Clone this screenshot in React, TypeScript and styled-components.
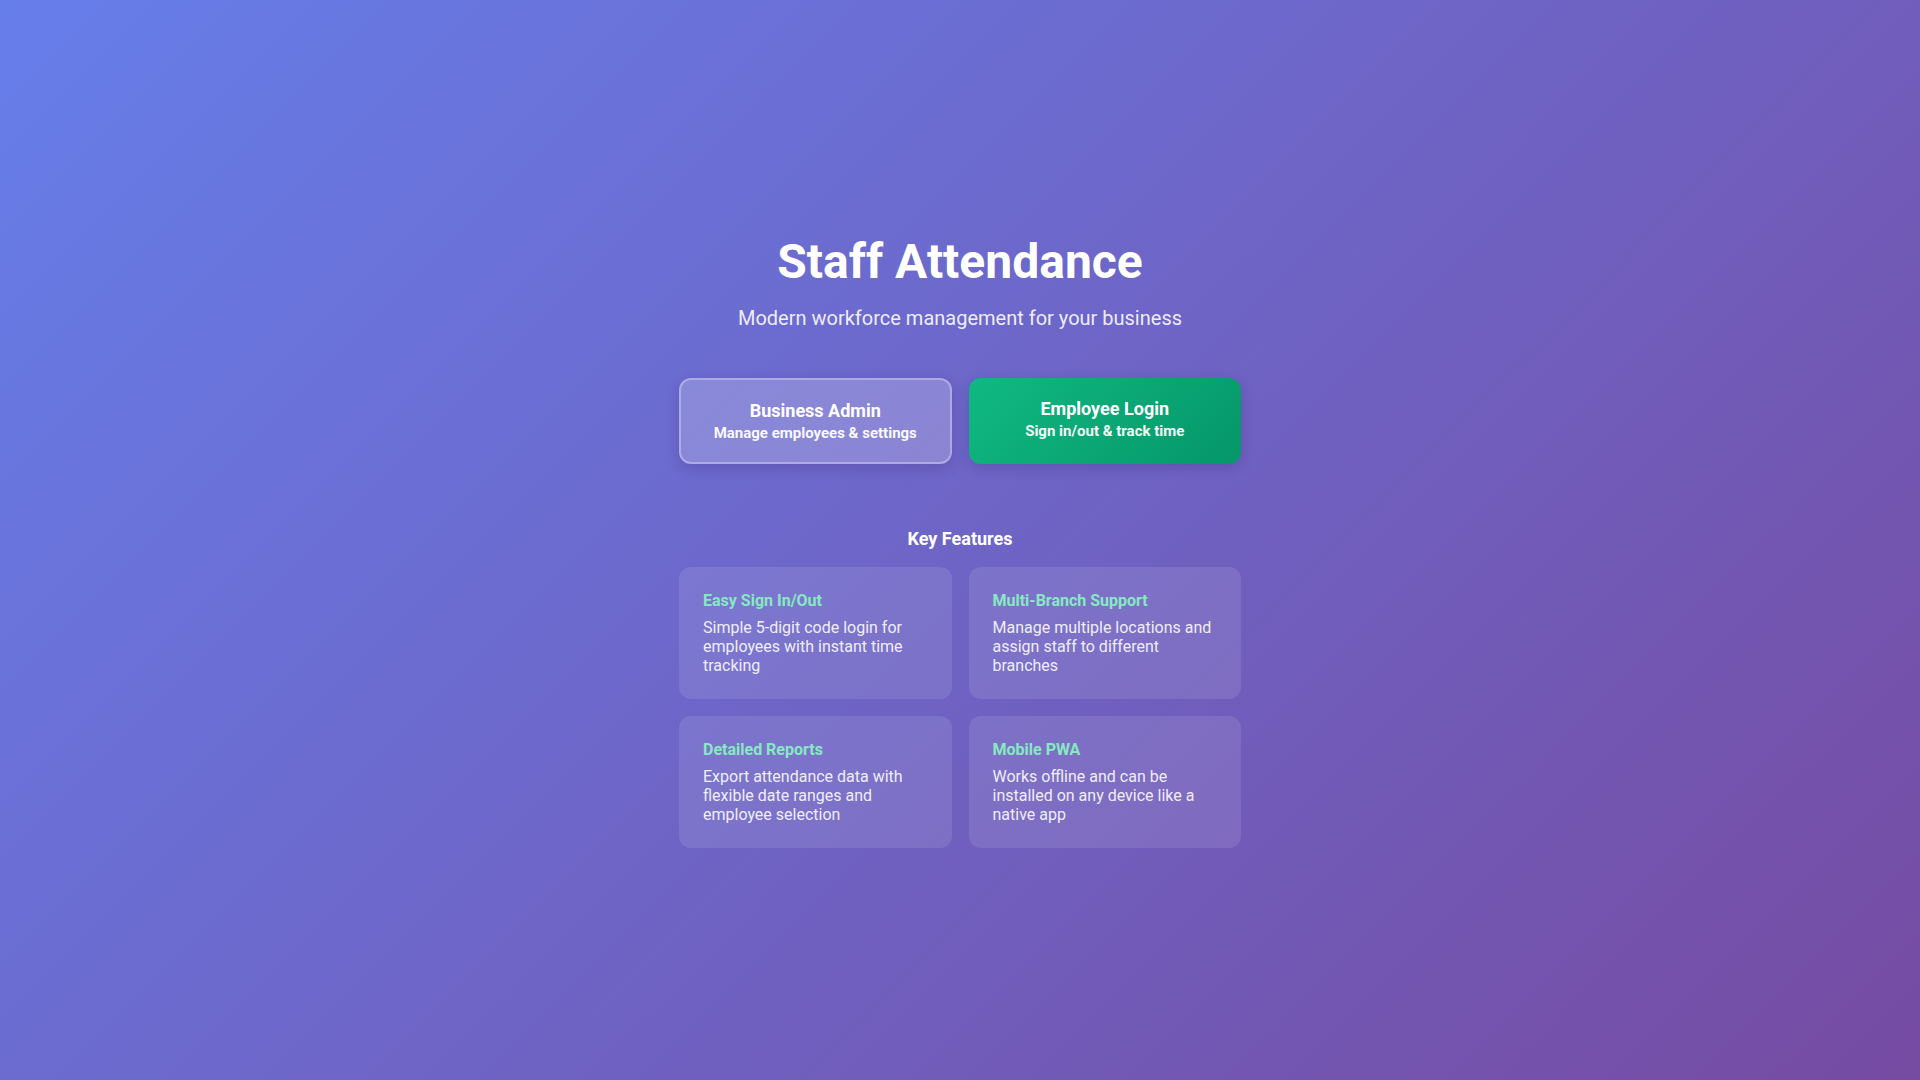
import styled, { createGlobalStyle } from "styled-components";

const GlobalStyle = createGlobalStyle`
  * {
    box-sizing: border-box;
  }

  body {
    margin: 0;
    font-family: Roboto, "Liberation Sans", Arial, sans-serif;
    color: #ffffff;
    background: linear-gradient(135deg, #667eea 0%, #764ba2 100%);
    min-height: 100vh;
  }
`;

const features = [
  {
    title: "Easy Sign In/Out",
    text: "Simple 5-digit code login for employees with instant time tracking",
  },
  {
    title: "Multi-Branch Support",
    text: "Manage multiple locations and assign staff to different branches",
  },
  {
    title: "Detailed Reports",
    text: "Export attendance data with flexible date ranges and employee selection",
  },
  {
    title: "Mobile PWA",
    text: "Works offline and can be installed on any device like a native app",
  },
];

export default function App() {
  return (
    <>
      <GlobalStyle />
      <Page>
        <Container>
          <Title>Staff Attendance</Title>
          <Subtitle>Modern workforce management for your business</Subtitle>

          <ActionGrid>
            <ActionButton $variant="ghost">
              <ActionTitle>Business Admin</ActionTitle>
              <ActionText>Manage employees &amp; settings</ActionText>
            </ActionButton>
            <ActionButton $variant="primary">
              <ActionTitle>Employee Login</ActionTitle>
              <ActionText>Sign in/out &amp; track time</ActionText>
            </ActionButton>
          </ActionGrid>

          <FeaturesSection>
            <SectionTitle>Key Features</SectionTitle>
            <FeatureGrid>
              {features.map((f) => (
                <FeatureCard key={f.title}>
                  <FeatureTitle>{f.title}</FeatureTitle>
                  <FeatureText>{f.text}</FeatureText>
                </FeatureCard>
              ))}
            </FeatureGrid>
          </FeaturesSection>
        </Container>
      </Page>
    </>
  );
}

/* ===== styled-components ===== */

const Page = styled.div`
  min-height: 100vh;
  display: flex;
  align-items: center;
  justify-content: center;
`;

const Container = styled.main`
  width: 100%;
  max-width: 562px;
  text-align: center;
`;

const Title = styled.h1`
  margin: 0;
  font-size: 48px;
  font-weight: 700;
  line-height: normal;
`;

const Subtitle = styled.p`
  margin: 16px 0 0;
  font-size: 20px;
  font-weight: 400;
  line-height: normal;
  color: rgba(255, 255, 255, 0.9);
`;

const ActionGrid = styled.div`
  margin-top: 48px;
  display: grid;
  grid-template-columns: repeat(2, minmax(0, 1fr));
  gap: 17px;
`;

const ActionButton = styled.button<{ $variant: "ghost" | "primary" }>`
  display: flex;
  flex-direction: column;
  align-items: center;
  padding: 20px 24px;
  border-radius: 12px;
  font-family: inherit;
  color: #ffffff;
  cursor: pointer;
  box-shadow: 0 4px 14px rgba(40, 20, 90, 0.2);
  border: ${(p) => (p.$variant === "ghost" ? "2px solid rgba(255, 255, 255, 0.3)" : "none")};
  background: ${(p) =>
    p.$variant === "ghost"
      ? "rgba(255, 255, 255, 0.2)"
      : "linear-gradient(135deg, #10b981 0%, #059669 100%)"};
`;

const ActionTitle = styled.span`
  font-size: 18px;
  font-weight: 700;
  line-height: normal;
`;

const ActionText = styled.span`
  margin-top: 3px;
  font-size: 15px;
  font-weight: 700;
  line-height: normal;
  opacity: 0.95;
`;

const FeaturesSection = styled.section`
  margin-top: 64px;
`;

const SectionTitle = styled.h3`
  margin: 0 0 18px;
  font-size: 18px;
  font-weight: 700;
  line-height: normal;
`;

const FeatureGrid = styled.div`
  display: grid;
  grid-template-columns: repeat(2, minmax(0, 1fr));
  gap: 17px;
  text-align: left;
`;

const FeatureCard = styled.div`
  padding: 24px;
  border-radius: 12px;
  background: rgba(255, 255, 255, 0.1);
`;

const FeatureTitle = styled.h4`
  margin: 0 0 8px;
  font-size: 16px;
  font-weight: 700;
  line-height: normal;
  color: #86e9c2;
`;

const FeatureText = styled.p`
  margin: 0;
  font-size: 16px;
  line-height: 19px;
  color: rgba(255, 255, 255, 0.9);
`;
